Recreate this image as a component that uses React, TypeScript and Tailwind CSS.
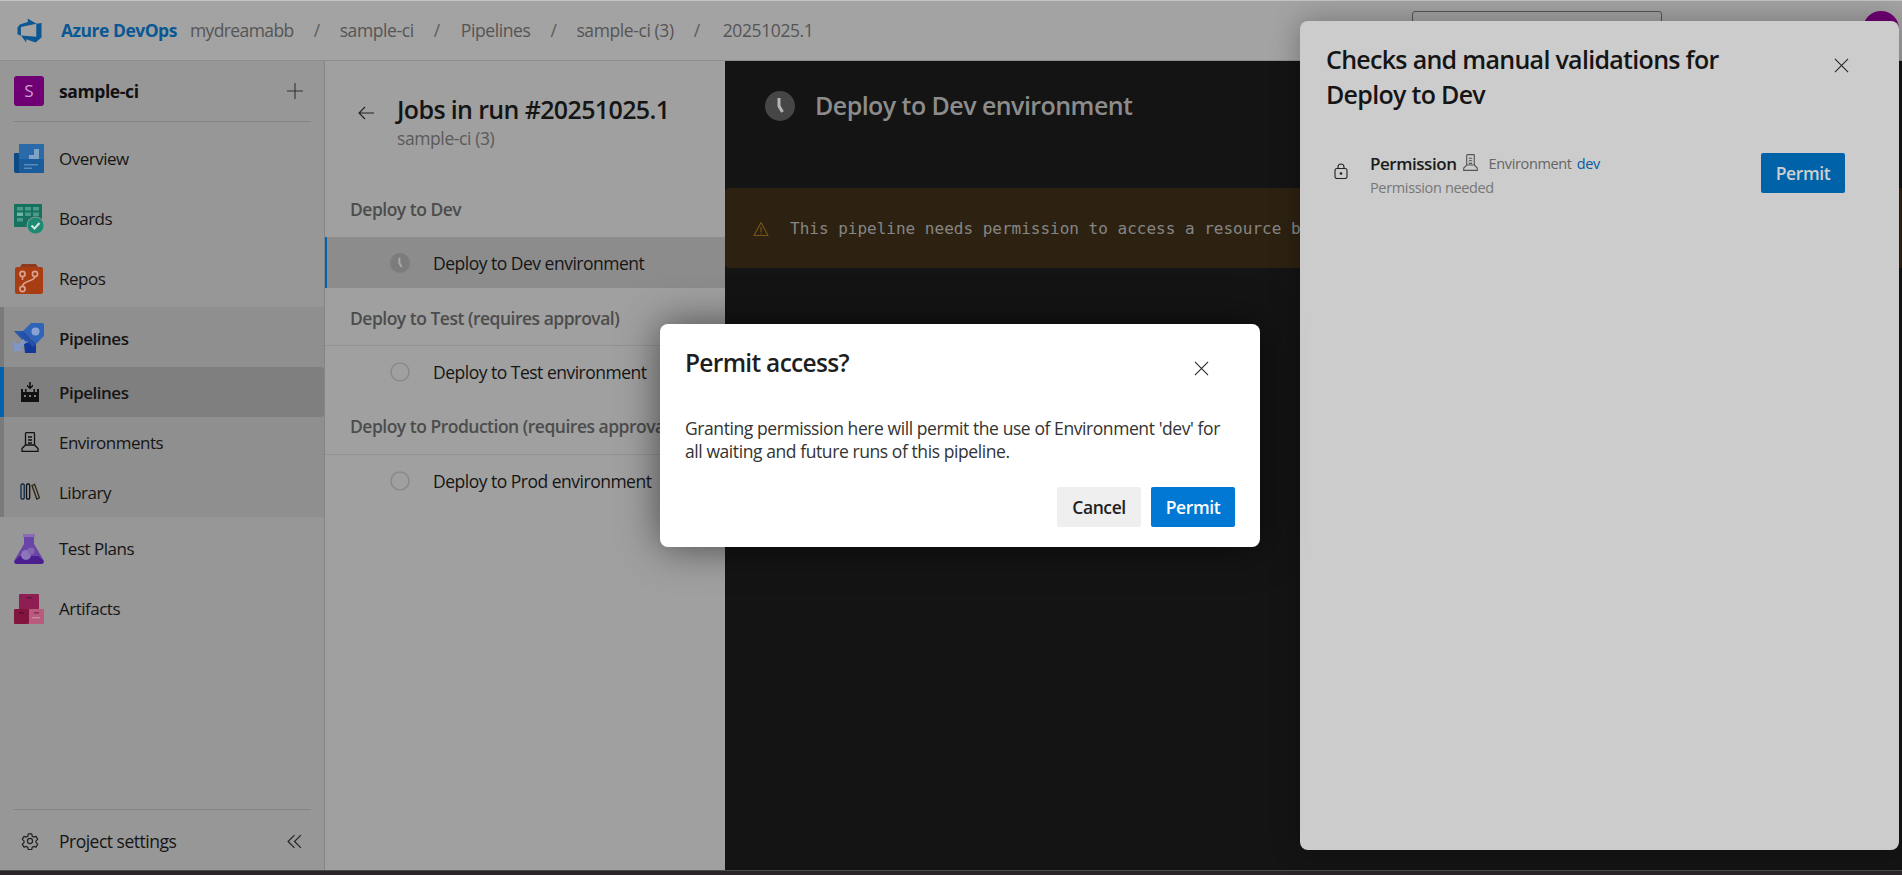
import React from 'react';

const sans = "font-['Open_Sans',_'Noto_Sans',sans-serif]";

const DevOpsLogo = () => (
  <svg viewBox="0 0 18 18" className="w-[27px] h-[27px]" fill="#0a5793">
    <path d="M17 4v9.74l-4 3.28-6.2-2.26V17l-3.51-4.59 10.23.8V4.44zm-3.41.49L7.85 1v2.37L2.58 4.92 1 6.95v4.61l2.26 1V6.63z" />
  </svg>
);

const OverviewIcon = () => (
  <svg viewBox="0 0 30 30" className="w-[30px] h-[30px]">
    <path d="M5 0h24a1 1 0 0 1 1 1v27a1 1 0 0 1-1 1H5z" fill="#2a6aa8" />
    <path d="M1 9h4v20H2a2 2 0 0 1-2-2V10a1 1 0 0 1 1-1z" fill="#0c4a86" />
    <path d="M5 15h25v13a1 1 0 0 1-1 1H5z" fill="#1a5c9c" />
    <path d="M10 15h5v-4h5V5h5v10z" fill="#7ea3c4" />
    <rect x="10" y="20" width="14" height="1.5" fill="#5b8ab6" />
    <rect x="10" y="23.5" width="8" height="1.5" fill="#5b8ab6" />
  </svg>
);

const BoardsIcon = () => (
  <svg viewBox="0 0 30 30" className="w-[30px] h-[30px]">
    <rect x="0" y="0" width="28" height="23" rx="1" fill="#14725f" />
    <rect x="3" y="3" width="6" height="3.5" fill="#4c9b88" />
    <rect x="11" y="3" width="6" height="3.5" fill="#4c9b88" />
    <rect x="19" y="3" width="6" height="3.5" fill="#4c9b88" />
    <rect x="3" y="8.5" width="6" height="3.5" fill="#6fb5a5" />
    <rect x="11" y="8.5" width="6" height="3.5" fill="#4c9b88" />
    <rect x="19" y="8.5" width="6" height="3.5" fill="#4c9b88" />
    <rect x="3" y="14" width="6" height="3.5" fill="#4c9b88" />
    <circle cx="21.5" cy="21.5" r="9" fill="#979797" />
    <circle cx="21.5" cy="21.5" r="8" fill="#1c8a72" />
    <path d="M17.5 21.5l3 3 5-5.5" stroke="#cfe5df" strokeWidth="2.2" fill="none" />
  </svg>
);

const ReposIcon = () => (
  <svg viewBox="0 0 30 30" className="w-[30px] h-[30px]">
    <path d="M3 3h24a2 2 0 0 1 2 2v23a2 2 0 0 1-2 2H3a2 2 0 0 1-2-2V5a2 2 0 0 1 2-2z" fill="#a83c12" />
    <path d="M6 3l2-3h14l2 3z" fill="#8f3a1c" />
    <g fill="none" stroke="#d8a48e" strokeWidth="1.6">
      <circle cx="8.5" cy="10" r="2.6" />
      <circle cx="21" cy="10" r="2.6" />
      <circle cx="8.5" cy="25" r="2.6" />
      <path d="M8.5 12.6v3.4M21 12.6c0 5-12.5 4-12.5 9.8" />
    </g>
  </svg>
);

const PipelinesIcon = () => (
  <svg viewBox="0 0 30 30" className="w-[30px] h-[30px]">
    <path d="M0 8h11l6 6-6 6z" fill="#2a56ad" />
    <path d="M22 16v14H11l-1-9z" fill="#12389c" />
    <path d="M17 0h11a2 2 0 0 1 2 2v11l-8 8L9 8z" fill="#3064b8" />
    <path d="M9 8l13 13-3 3-13-13z" fill="#2550a8" />
    <circle cx="21.5" cy="8.5" r="4" fill="#8aa3d2" />
    <path d="M0 19v9h9l-3-3 6-6-3-3-5 6-3-3z" fill="#7e96ca" />
  </svg>
);

const SubPipelinesIcon = () => (
  <svg viewBox="0 0 20 20" className="w-[20px] h-[20px]" fill="#111">
    <path d="M9.2 0h1.6v4.5L13 2.6v2L10 7.2 7 4.6v-2l2.2 1.9z" />
    <path d="M1 7h2v3h2V7h1.5v3h7V7H15v3h2V7h2v13H1z" />
    <rect x="4" y="13" width="2" height="2" fill="#7f7f7f" />
    <rect x="9" y="13" width="2" height="2" fill="#7f7f7f" />
    <rect x="14" y="13" width="2" height="2" fill="#7f7f7f" />
  </svg>
);

const EnvIcon = ({ className, color = '#111' }: { className: string; color?: string }) => (
  <svg viewBox="0 0 20 20" className={className} fill="none" stroke={color} strokeWidth="1.3">
    <path d="M5.5 13V1.5a.8.8 0 0 1 .8-.8h7.4a.8.8 0 0 1 .8.8V13" />
    <path d="M5.5 13L2 16.5v2.8h16v-2.8L14.5 13z" />
    <path d="M8 5h4M8 8h4M8 11h4" />
  </svg>
);

const LibraryIcon = () => (
  <svg viewBox="0 0 20 20" className="w-[20px] h-[20px]" fill="none" stroke="#111" strokeWidth="1.3">
    <rect x="1" y="2" width="3.2" height="15" rx="1.2" stroke="#0b2a4a" />
    <rect x="6.5" y="2" width="3.2" height="15" rx="1.2" />
    <path d="M12 3.5l2.6-1.2 4.8 13.5-2.6 1.2z" stroke="#2c2412" />
  </svg>
);

const TestPlansIcon = () => (
  <svg viewBox="0 0 30 30" className="w-[30px] h-[30px]">
    <path d="M9 0h12v3h-1v7l9.5 16a2.6 2.6 0 0 1-2.3 4H2.8a2.6 2.6 0 0 1-2.3-4L10 10V3H9z" fill="#6a45a8" />
    <path d="M5.5 22h19l5 5a2.4 2.4 0 0 1-2.3 3H2.8a2.4 2.4 0 0 1-2.3-3z" fill="#4a1e8e" />
    <rect x="9" y="0" width="12" height="3" fill="#8a6bb8" />
    <circle cx="12" cy="21" r="5" fill="#8e74ba" />
    <circle cx="17" cy="17" r="3.5" fill="#8266ae" />
  </svg>
);

const ArtifactsIcon = () => (
  <svg viewBox="0 0 30 30" className="w-[30px] h-[30px]">
    <rect x="5" y="0" width="20" height="16" rx="1" fill="#8f1f52" />
    <rect x="0" y="15" width="15" height="15" rx="1" fill="#83143f" />
    <rect x="15" y="15" width="15" height="15" rx="1" fill="#b85b7d" />
    <rect x="12" y="3" width="6" height="1.6" fill="#6d1540" />
    <rect x="5" y="18" width="5" height="1.6" fill="#5c0c2c" />
    <rect x="20" y="18" width="5" height="1.6" fill="#8c2f55" />
    <rect x="18" y="23" width="8" height="1.4" fill="#d089a5" />
  </svg>
);

const Gear = () => (
  <svg viewBox="0 0 24 24" className="w-[18px] h-[18px]" fill="none" stroke="#222" strokeWidth="1.6">
    <path d="M9.7 2.5h4.6l.6 3 2.2 1.3 2.9-1 2.3 4-2.3 2v2.4l2.3 2-2.3 4-2.9-1-2.2 1.3-.6 3H9.7l-.6-3-2.2-1.3-2.9 1-2.3-4 2.3-2v-2.4l-2.3-2 2.3-4 2.9 1 2.2-1.3z" strokeLinejoin="round" />
    <circle cx="12" cy="12" r="3.4" />
  </svg>
);

const Close = ({ className }: { className: string }) => (
  <svg viewBox="0 0 16 16" className={className} fill="none" stroke="#222" strokeWidth="1.1">
    <path d="M1 1l14 14M15 1L1 15" />
  </svg>
);

const ClockFilled = ({ className, bg, hand }: { className: string; bg: string; hand: string }) => (
  <svg viewBox="0 0 30 30" className={className}>
    <circle cx="15" cy="15" r="15" fill={bg} />
    <path d="M14 7v8l3.5 6" fill="none" stroke={hand} strokeWidth="3" />
  </svg>
);

const Ring = () => (
  <svg viewBox="0 0 20 20" className="w-[20px] h-[20px]" fill="none" stroke="#8a8a8a" strokeWidth="1.5">
    <circle cx="10" cy="10" r="9" />
  </svg>
);

const NavItem = ({ icon, label }: { icon: React.ReactNode; label: string }) => (
  <div className="flex items-center pl-[14px] h-[60px]">
    <div className="w-[30px] h-[30px] shrink-0">{icon}</div>
    <span className="ml-[15px] text-[17px] tracking-[-0.5px] text-[#151515]">{label}</span>
  </div>
);

const SubItem = ({ icon, label, active }: { icon: React.ReactNode; label: string; active?: boolean }) => (
  <div className={`relative flex items-center h-[50px] pl-[16px] ${active ? 'bg-[#7f7f7f] rounded-r-[4px]' : ''}`}>
    {active && <div className="absolute left-[-4px] top-0 bottom-0 w-[4px] bg-[#0063b1]" />}
    <div className="w-[20px] h-[20px] shrink-0">{icon}</div>
    <span className={`ml-[19px] mt-[2px] text-[17px] tracking-[-0.5px] text-[#151515] ${active ? 'font-semibold' : ''}`}>{label}</span>
  </div>
);

const Sidebar = () => (
  <aside className="w-[325px] shrink-0 bg-[#979797] border-r border-[#858585] flex flex-col">
    <div className="flex items-center h-[60px] pl-[14px] pr-[21px]">
      <div className="w-[30px] h-[30px] rounded-[3px] bg-[#6f0073] text-[#c9a0c9] flex items-center justify-center text-[17px]">S</div>
      <span className="ml-[15px] text-[17.5px] tracking-[-0.4px] font-bold text-[#111] flex-1">sample-ci</span>
      <svg viewBox="0 0 16 16" className="w-[16px] h-[16px]" fill="none" stroke="#333" strokeWidth="1.1">
        <path d="M8 0v16M0 8h16" />
      </svg>
    </div>
    <div className="mx-[13px] border-t border-[#858585]" />
    <div className="pt-[7px] h-[185px]">
      <NavItem icon={<OverviewIcon />} label="Overview" />
      <NavItem icon={<BoardsIcon />} label="Boards" />
      <NavItem icon={<ReposIcon />} label="Repos" />
    </div>
    <div className="border-l-[4px] border-[#7a7a7a] bg-[#8f8f8f] h-[210px]">
      <div className="flex items-center h-[60px] pl-[10px]">
        <div className="w-[30px] h-[30px] shrink-0 mt-[2px]"><PipelinesIcon /></div>
        <span className="ml-[15px] mt-[3px] text-[17px] tracking-[-0.5px] font-semibold text-[#151515]">Pipelines</span>
      </div>
      <SubItem icon={<SubPipelinesIcon />} label="Pipelines" active />
      <SubItem icon={<EnvIcon className="w-[20px] h-[20px]" />} label="Environments" />
      <SubItem icon={<LibraryIcon />} label="Library" />
    </div>
    <div className="pt-[2px]">
      <NavItem icon={<TestPlansIcon />} label="Test Plans" />
      <NavItem icon={<ArtifactsIcon />} label="Artifacts" />
    </div>
    <div className="flex-1" />
    <div className="mx-[13px] border-t border-[#858585]" />
    <div className="flex items-center h-[60px] pt-[2px] pl-[21px] pr-[22px]">
      <Gear />
      <span className="ml-[20px] text-[17.5px] tracking-[-0.5px] text-[#151515] flex-1">Project settings</span>
      <svg viewBox="0 0 14 14" className="w-[15px] h-[15px]" fill="none" stroke="#222" strokeWidth="1.1">
        <path d="M7 1L1 7l6 6M13 1L7 7l6 6" />
      </svg>
    </div>
  </aside>
);

const GroupTitle = ({ label, className }: { label: string; className: string }) => (
  <div className={`flex items-center pl-[25px] whitespace-nowrap text-[17.5px] tracking-[-0.5px] font-semibold text-[#4c4c4c] ${className}`}>
    {label}
  </div>
);

const JobRow = ({ icon, label, active }: { icon: React.ReactNode; label: string; active?: boolean }) => (
  <div className={`relative flex items-center h-[51px] pl-[65px] whitespace-nowrap ${active ? 'bg-[#8c8c8c]' : ''}`}>
    {active && <div className="absolute left-0 top-0 bottom-0 w-[2px] bg-[#0063b1]" />}
    <div className="w-[20px] h-[20px] shrink-0">{icon}</div>
    <span className="ml-[23px] mt-[1px] text-[17.5px] tracking-[-0.5px] text-[#151515]">{label}</span>
  </div>
);

const JobsPanel = () => (
  <section className="w-[400px] shrink-0 bg-[#a0a0a0] overflow-hidden">
    <div className="flex pt-[31px] pl-[33px] h-[123px]">
      <svg viewBox="0 0 16 14" className="w-[16px] h-[14px] mt-[14px]" fill="none" stroke="#222" strokeWidth="1.1">
        <path d="M16 7H1M7 1L1 7l6 6" />
      </svg>
      <div className="ml-[23px]">
        <div className="text-[25px] leading-[34px] tracking-[-0.64px] font-semibold text-[#151515] whitespace-nowrap">Jobs in run #20251025.1</div>
        <div className="text-[17.5px] leading-[24px] tracking-[-0.4px] text-[#5a5a5a]">sample-ci (3)</div>
      </div>
    </div>
    <GroupTitle label="Deploy to Dev" className="h-[53px] pb-[3px]" />
    <JobRow active label="Deploy to Dev environment" icon={<ClockFilled className="w-[20px] h-[20px]" bg="#7c7c7c" hand="#a8a8a8" />} />
    <GroupTitle label="Deploy to Test (requires approval)" className="h-[58px] pt-[3px] border-b border-[#929292]" />
    <JobRow label="Deploy to Test environment" icon={<Ring />} />
    <GroupTitle label="Deploy to Production (requires approval)" className="h-[58px] pt-[1px] border-b border-[#929292]" />
    <JobRow label="Deploy to Prod environment" icon={<Ring />} />
  </section>
);

const LogPanel = () => (
  <main className="flex-1 min-w-0 bg-[#141414] overflow-hidden">
    <div className="flex items-center h-[127px] pl-[40px] pr-4 pb-[38px]">
      <ClockFilled className="w-[30px] h-[30px]" bg="#464646" hand="#b4b4b4" />
      <span className="ml-[20px] text-[25px] tracking-[-0.55px] font-semibold text-[#8c8c8c]">Deploy to Dev environment</span>
    </div>
    <div className="flex items-center h-[80px] bg-[#2d2211] rounded-l-[4px] pl-[28px] pt-[1px] whitespace-nowrap">
      <svg viewBox="0 0 16 16" className="w-[16px] h-[16px] shrink-0" fill="none" stroke="#7a5416" strokeWidth="1.1">
        <path d="M8 1.5L15 14.5H1z" strokeLinejoin="round" />
        <path d="M8 6v5M8 12v1.2" />
      </svg>
      <span className="ml-[21px] font-['DejaVu_Sans_Mono',monospace] text-[16px] text-[#858585]">
        This pipeline needs permission to access a resource before this run can continue
      </span>
    </div>
  </main>
);

const Crumb = ({ label, className = '' }: { label: string; className?: string }) => (
  <>
    <span className="mx-[20px] text-[#5c5c5c]">/</span>
    <span className={className}>{label}</span>
  </>
);

const TopBar = () => (
  <header className="relative h-[61px] shrink-0 bg-[#a3a3a3] border-t border-t-[#c4c4c4] border-b border-b-[#8e8e8e] flex items-center pl-[16px]">
    <DevOpsLogo />
    <span className="ml-[18px] text-[17.5px] tracking-[-0.5px] font-bold text-[#0a5793]">Azure DevOps</span>
    <div className="ml-[13px] flex items-center text-[17.5px] tracking-[-0.4px] text-[#555]">
      <span className="tracking-[-0.6px]">mydreamabb</span>
      <Crumb label="sample-ci" />
      <Crumb label="Pipelines" className="ml-[1px]" />
      <Crumb label="sample-ci (3)" />
      <Crumb label="20251025.1" className="ml-[3px]" />
    </div>
    <div className="flex-1" />
    <div className="absolute left-[1412px] top-[10px] w-[250px] h-[40px] rounded-[3px] border border-[#555]" />
    <div className="absolute left-[1863px] top-[10px] w-[36px] h-[36px] rounded-full bg-[#6f0073]" />
  </header>
);

const PermitModal = () => (
  <div className="absolute left-[660px] top-[324px] w-[600px] h-[223px] rounded-[8px] bg-white shadow-[0_0_40px_rgba(0,0,0,0.55)] px-[25px] flex flex-col">
    <div className="flex items-start justify-between pt-[22px] pr-[26px]">
      <span className="text-[24.5px] leading-[34px] tracking-[-0.7px] font-semibold text-[#1e1e1e]">Permit access?</span>
      <Close className="w-[15px] h-[15px] mt-[15px]" />
    </div>
    <p className="mt-[37px] text-[17.5px] leading-[23px] tracking-[-0.42px] text-[#333]">
      Granting permission here will permit the use of Environment 'dev' for all waiting and future runs of this pipeline.
    </p>
    <div className="mt-[24px] flex justify-end gap-[10px]">
      <button className="w-[84px] h-[40px] rounded-[2px] bg-[#efefef] text-[17.5px] tracking-[-0.4px] font-semibold text-[#222]">Cancel</button>
      <button className="w-[84px] h-[40px] rounded-[2px] bg-[#0078d4] text-[17.5px] tracking-[-0.4px] font-semibold text-white">Permit</button>
    </div>
  </div>
);

const ChecksPanel = () => (
  <div className="absolute left-[1300px] top-[21px] w-[599px] h-[829px] rounded-[8px] bg-[#cccccc] shadow-[0_0_30px_rgba(0,0,0,0.3)] flex flex-col">
    <div className="flex items-start justify-between pt-[21px] pl-[26px] pr-[50px]">
      <div className="w-[440px] text-[25px] leading-[35px] tracking-[-0.7px] font-semibold text-[#151515]">
        Checks and manual validations for Deploy to Dev
      </div>
      <Close className="w-[15px] h-[15px] mt-[16px]" />
    </div>
    <div className="mt-[36px] flex items-center pl-[33px] pr-[54px]">
      <svg viewBox="0 0 16 16" className="w-[16px] h-[16px] shrink-0 mb-[4px]" fill="none" stroke="#222" strokeWidth="1.1">
        <rect x="2" y="5.5" width="12" height="10" rx="2" />
        <path d="M5 5.5V4a3 3 0 0 1 6 0v1.5" />
        <circle cx="8" cy="10.5" r="0.8" fill="#222" />
      </svg>
      <div className="ml-[21px] flex-1 mt-[3px]">
        <div className="flex items-center whitespace-nowrap">
          <span className="text-[17px] tracking-[-0.45px] font-semibold text-[#1a1a1a]">Permission</span>
          <EnvIcon className="w-[17px] h-[17px] ml-[5px] -mt-[3px]" color="#555" />
          <span className="ml-[10px] text-[14.5px] tracking-[-0.35px] text-[#666]">Environment</span>
          <span className="ml-[5px] text-[14.5px] tracking-[-0.35px] text-[#0a5a9e]">dev</span>
        </div>
        <div className="text-[14.5px] tracking-[-0.35px] text-[#777]">Permission needed</div>
      </div>
      <button className="w-[84px] h-[40px] rounded-[2px] bg-[#0063aa] text-[17.5px] tracking-[-0.4px] font-semibold text-[#cfcfcf]">Permit</button>
    </div>
  </div>
);

export default function App() {
  return (
    <div className={`relative w-[1902px] h-[875px] overflow-hidden flex flex-col bg-[#141414] ${sans}`}>
      <TopBar />
      <div className="flex h-[809px] shrink-0">
        <Sidebar />
        <JobsPanel />
        <LogPanel />
      </div>
      <div className="h-[5px] shrink-0 bg-[#2b2428] border-t border-[#4a4a4a]" />
      <ChecksPanel />
      <PermitModal />
    </div>
  );
}
